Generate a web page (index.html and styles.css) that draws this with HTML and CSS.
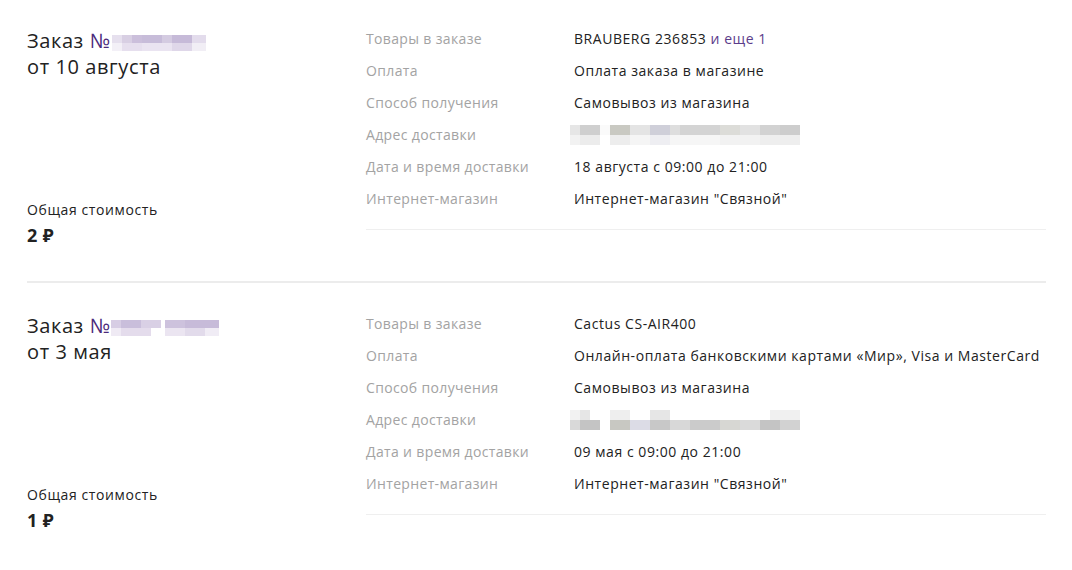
FILE: index.html
```html
<!DOCTYPE html>
<html lang="ru">
<head>
    <meta charset="UTF-8">
    <meta name="viewport" content="width=device-width, initial-scale=1.0">
    <link rel="stylesheet" href="styles.css">
    <title>Мои заказы</title>
</head>
<body>
    <div class="orders">
        <div class="order">
            <div class="order-summary">
                <div class="order-title">
                    Заказ <span class="order-num">№<span class="blur blur-num"></span></span><br>
                    от 10 августа
                </div>
                <div class="order-total">
                    <span>Общая стоимость</span>
                    <b>2 ₽</b>
                </div>
            </div>
            <div class="order-details">
                <div class="row"><span class="label">Товары в заказе</span><span class="value">BRAUBERG 236853 <span class="more">и еще 1</span></span></div>
                <div class="row"><span class="label">Оплата</span><span class="value">Оплата заказа в магазине</span></div>
                <div class="row"><span class="label">Способ получения</span><span class="value">Самовывоз из магазина</span></div>
                <div class="row"><span class="label">Адрес доставки</span><span class="value"><span class="blur blur-addr"></span></span></div>
                <div class="row"><span class="label">Дата и время доставки</span><span class="value">18 августа с 09:00 до 21:00</span></div>
                <div class="row"><span class="label">Интернет-магазин</span><span class="value">Интернет-магазин "Связной"</span></div>
            </div>
        </div>
        <div class="order">
            <div class="order-summary">
                <div class="order-title">
                    Заказ <span class="order-num">№<span class="blur blur-num2"></span></span><br>
                    от 3 мая
                </div>
                <div class="order-total">
                    <span>Общая стоимость</span>
                    <b>1 ₽</b>
                </div>
            </div>
            <div class="order-details">
                <div class="row"><span class="label">Товары в заказе</span><span class="value">Cactus CS-AIR400</span></div>
                <div class="row"><span class="label">Оплата</span><span class="value">Онлайн-оплата банковскими картами «Мир», Visa и MasterCard</span></div>
                <div class="row"><span class="label">Способ получения</span><span class="value">Самовывоз из магазина</span></div>
                <div class="row"><span class="label">Адрес доставки</span><span class="value"><span class="blur blur-addr2"></span></span></div>
                <div class="row"><span class="label">Дата и время доставки</span><span class="value">09 мая с 09:00 до 21:00</span></div>
                <div class="row"><span class="label">Интернет-магазин</span><span class="value">Интернет-магазин "Связной"</span></div>
            </div>
        </div>
    </div>
</body>
</html>
```

FILE: styles.css
```css
body{
    margin: 0;
    background: #fff;
    color: #222;
    font-family: "Open Sans", "Noto Sans", sans-serif;
}
.orders{
    width: 1019px;
    margin-left: 27px;
    padding-top: 22px;
}
.order{
    display: flex;
    padding-bottom: 34px;
    border-bottom: 2px solid #ececec;
}
.order + .order{
    padding-top: 24px;
    border-bottom: none;
}
.order-summary{
    width: 339px;
    min-height: 225px;
    box-sizing: border-box;
    padding-top: 6px;
    display: flex;
    flex-direction: column;
    justify-content: space-between;
}
.order-title{
    font-size: 20px;
    line-height: 26px;
    letter-spacing: 0.6px;
}
.order-num{
    color: #4b2a7b;
}
.order-total span{
    display: block;
    font-size: 14px;
    line-height: 20px;
    letter-spacing: 0.6px;
}
.order-total b{
    display: block;
    margin-top: 3px;
    font-size: 18px;
    line-height: 24px;
    letter-spacing: 0.4px;
}
.order-details{
    flex: 1;
    align-self: flex-start;
    padding-bottom: 15px;
    border-bottom: 1px solid #efefef;
}
.row{
    display: flex;
    height: 32px;
    align-items: center;
    font-size: 14px;
}
.label{
    width: 208px;
    color: #a3a3a3;
    letter-spacing: 0.35px;
}
.value{
    letter-spacing: 0.55px;
}
.more{
    color: #5b3c8a;
}
.blur{
    display: inline-block;
    vertical-align: middle;
}
.blur-num{
    width: 94px;
    height: 16px;
    margin-left: 1px;
    background:
        linear-gradient(90deg, #e6e0ee 0 10px, #d8cfe3 10px 20px, #cbbfdb 20px 30px, #c7bcd9 30px 50px, #d4cbe1 50px 60px, #c6bad8 60px 80px, #e3dcec 80px 94px) top / 100% 8px no-repeat,
        linear-gradient(90deg, #f3f0f7 0 10px, #e6dfee 10px 30px, #eae4f1 30px 60px, #dfd7e9 60px 80px, #f1eef5 80px 94px) bottom / 100% 8px no-repeat;
}
.blur-num2{
    width: 108px;
    height: 16px;
    background:
        linear-gradient(90deg, #d7cde4 0 10px, #c9bedb 10px 30px, #d9d0e5 30px 50px, #fff 50px 54px, #cdc2dd 54px 74px, #c7bbd9 74px 108px) top / 100% 8px no-repeat,
        linear-gradient(90deg, #efeaf4 0 10px, #e4dcec 10px 40px, #fff 40px 54px, #ebe5f1 54px 74px, #e2dbeb 74px 94px, #f0ecf5 94px 108px) bottom / 100% 8px no-repeat;
}
.blur-addr{
    width: 230px;
    height: 20px;
    margin-left: -4px;
    background:
        linear-gradient(90deg, #e6e6e6 0 10px, #cfcfcf 10px 30px, #fafafa 30px 40px, #c9c9c2 40px 60px, #e4e4e4 60px 80px, #cfcfd9 80px 100px, #dedede 100px 110px, #d4d4d4 110px 150px, #dcdcd8 150px 170px, #e2e2e2 170px 190px, #d2d2d2 190px 210px, #cdcdcd 210px 230px) top / 100% 10px no-repeat,
        linear-gradient(90deg, #f2f2f2 0 10px, #ececec 10px 30px, #fff 30px 40px, #ededed 40px 60px, #f5f5f5 60px 80px, #eeeef2 80px 100px, #f6f6f6 100px 150px, #f2f2f2 150px 190px, #eeeeee 190px 230px) bottom / 100% 10px no-repeat;
}
.blur-addr2{
    width: 230px;
    height: 20px;
    margin-left: -4px;
    background:
        linear-gradient(90deg, #f2f2f2 0 10px, #e6e6e6 10px 20px, #fff 20px 40px, #eeeeee 40px 60px, #fff 60px 80px, #e6e6e6 80px 100px, #fff 100px 200px, #f0f0f0 200px 230px) top / 100% 10px no-repeat,
        linear-gradient(90deg, #d9d9d9 0 10px, #c4c4c4 10px 30px, #fff 30px 40px, #c8c8c2 40px 60px, #dcdce6 60px 80px, #c8c8c8 80px 100px, #d8d8d8 100px 120px, #cbcbcb 120px 150px, #d7d7d3 150px 170px, #dadada 170px 190px, #c4c4c4 190px 210px, #d2d2d2 210px 230px) bottom / 100% 10px no-repeat;
}
```
